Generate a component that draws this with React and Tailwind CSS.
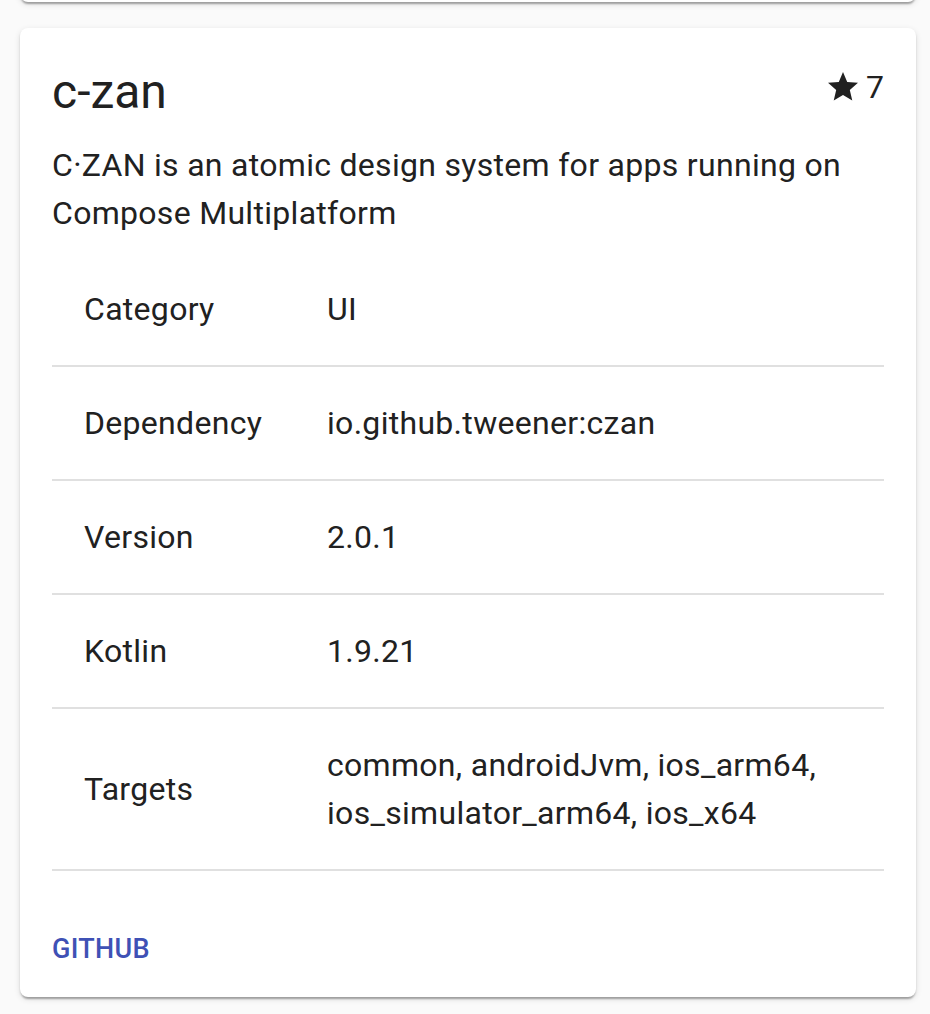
import React from "react";

const ROWS = [
  { label: "Category", value: "UI" },
  { label: "Dependency", value: "io.github.tweener:czan" },
  { label: "Version", value: "2.0.1" },
  { label: "Kotlin", value: "1.9.21" },
  {
    label: "Targets",
    value: "common, androidJvm, ios_arm64, ios_simulator_arm64, ios_x64",
  },
];

const StarIcon = () => (
  <svg viewBox="0 0 24 24" className="w-[36px] h-[36px] fill-[#212121]">
    <path d="M12 17.27L18.18 21l-1.64-7.03L22 9.24l-7.19-.61L12 2 9.19 8.63 2 9.24l5.46 4.73L5.82 21z" />
  </svg>
);

export default function App() {
  return (
    <div className="min-h-screen flex flex-col bg-[#fafafa] pl-[20px] pr-[14px] font-['Roboto','Liberation_Sans',sans-serif] text-[#212121]">
      {/* bottom edge of the previous card */}
      <div className="h-[20px] -mt-[18px] bg-white rounded-b-[8px] shadow-[0_4px_2px_-2px_rgba(0,0,0,0.2),0_2px_2px_0_rgba(0,0,0,0.14),0_2px_6px_0_rgba(0,0,0,0.12)]" />

      {/* CARD */}
      <div className="mt-[26px] bg-white rounded-[8px] shadow-[0_4px_2px_-2px_rgba(0,0,0,0.2),0_2px_2px_0_rgba(0,0,0,0.14),0_2px_6px_0_rgba(0,0,0,0.12)] px-[32px] pt-[32px] pb-[23px]">
        {/* HEADER */}
        <div className="flex items-start justify-between">
          <h2 className="text-[48px] leading-[64px] font-normal mb-[17px]">c-zan</h2>
          <div className="flex items-center mt-[3px] h-[48px]">
            <StarIcon />
            <span className="text-[32px] leading-[48px] ml-[5px]">7</span>
          </div>
        </div>

        <p className="text-[32px] leading-[48px] tracking-[0.3px]">
          C·ZAN is an atomic design system for apps running on Compose Multiplatform
        </p>

        {/* TABLE */}
        <div className="mt-[16px]">
          {ROWS.map((row) => (
            <div
              key={row.label}
              className="grid grid-cols-[243px_1fr] items-center border-b-2 border-[#e0e0e0] text-[32px] leading-[48px] tracking-[0.3px]"
            >
              <div className="py-[32px] pl-[32px]">{row.label}</div>
              <div className="py-[32px] px-[32px]">{row.value}</div>
            </div>
          ))}
        </div>

        {/* ACTIONS */}
        <div className="pt-[54px]">
          <span className="text-[27px] leading-[49px] font-medium uppercase tracking-[0.3px] text-[#3f51b5]">
            Github
          </span>
        </div>
      </div>
    </div>
  );
}
